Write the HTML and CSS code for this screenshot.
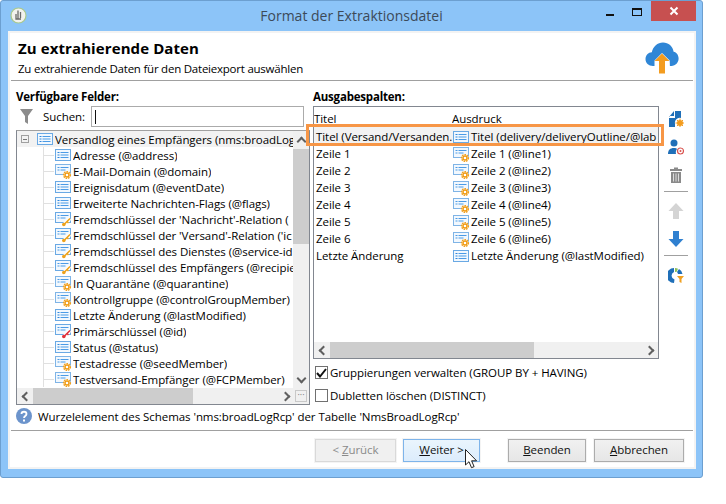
FILE: index.html
```html
<!DOCTYPE html>
<html lang="de">
<head>
    <meta charset="UTF-8">
    <title>Format der Extraktionsdatei</title>
    <link rel="stylesheet" href="styles.css">
</head>
<body>

<svg class="defs" width="0" height="0">
    <symbol id="list" viewBox="0 0 18 16">
        <rect x="1.5" y="2.5" width="15" height="11" fill="#f2f8fe" stroke="#6aa9e4"/>
        <path d="M3.5 5.5h2M3.5 8h2M3.5 10.5h2" stroke="#2f86dc" stroke-width="1.2"/>
        <path d="M6.5 5.5h8M6.5 8h8M6.5 10.5h8" stroke="#4b9be6" stroke-width="1.2"/>
    </symbol>
    <symbol id="gear" viewBox="0 0 18 16">
        <rect x="1.5" y="1.5" width="15" height="10" fill="#f2f8fe" stroke="#7fb4e6"/>
        <path d="M3.5 4.5h2M3.5 7h2M6.5 4.5h8M6.5 7h5" stroke="#4b9be6" stroke-width="1.2"/>
        <circle cx="13" cy="12" r="3.6" fill="#fff"/>
        <circle cx="13" cy="12" r="3.4" fill="none" stroke="#f0a020" stroke-width="1.4" stroke-dasharray="1.6 .9"/>
        <circle cx="13" cy="12" r="2" fill="none" stroke="#f09a10" stroke-width="1.4"/>
    </symbol>
    <symbol id="key" viewBox="0 0 18 16">
        <rect x="1.5" y="1.5" width="15" height="10" fill="#f2f8fe" stroke="#6aa9e4"/>
        <path d="M3.5 4.5h2M3.5 7h2M6.5 4.5h8M6.5 7h5" stroke="#4b9be6" stroke-width="1.2"/>
        <path d="M10.5 13 16 7.5" stroke="#fff" stroke-width="3.5"/>
        <path d="M10.5 13 16 7.5M13 10.500l1.500 1.500" stroke="#eda21c" stroke-width="1.6" fill="none"/>
        <circle cx="9.800" cy="13.500" r="1.800" fill="#eda21c"/>
    </symbol>
    <symbol id="redkey" viewBox="0 0 18 16">
        <rect x="1.5" y="1.5" width="15" height="10" fill="#f2f8fe" stroke="#6aa9e4"/>
        <path d="M3.5 4.5h2M3.5 7h2M6.5 4.5h8M6.5 7h5" stroke="#4b9be6" stroke-width="1.2"/>
        <path d="M10.5 13 16 7.5" stroke="#fff" stroke-width="3.5"/>
        <path d="M10.5 13 16 7.5M13 10.500l1.500 1.500" stroke="#e0303a" stroke-width="1.6" fill="none"/>
        <circle cx="9.800" cy="13.500" r="1.800" fill="#e0303a"/>
    </symbol>
</svg>

<div class="window">
    <div class="titlebar">
        <svg class="app-icon" width="17" height="17" viewBox="0 0 17 17">
            <circle cx="8.500" cy="8.500" r="7.500" fill="#f2f2ee" stroke="#a9c98c" stroke-width="1.200"/>
            <path d="M8 3.500v8M10.500 5v6M6 7v5h5" stroke="#6a6a6a" stroke-width="1.300" fill="none"/>
        </svg>
        <div class="title">Format der Extraktionsdatei</div>
        <div class="win-btns">
            <span class="win-min"></span>
            <span class="win-max"></span>
            <span class="win-close">
                <svg width="10" height="10" viewBox="0 0 10 10"><path d="M1.500 1.500l7 7M8.500 1.500l-7 7" stroke="#fff" stroke-width="2"/></svg>
            </span>
        </div>
    </div>

    <div class="dialog">
        <div class="head">
            <div>
                <h1>Zu extrahierende Daten</h1>
                <p>Zu extrahierende Daten für den Dateiexport auswählen</p>
            </div>
            <svg class="cloud" width="34" height="32" viewBox="0 0 34 32">
                <path d="M8 24C3.500 24 .5 21 .5 17c0-3.800 2.800-6.600 6.300-6.800C8 4.500 12.500.5 18 .5c5.500 0 9.800 3.800 10.600 9.300 3 .6 5 3.400 5 6.800 0 4-3 7.400-7.200 7.400h-1.500l-.2-5.500L17 11 9.500 18.500V24z" fill="#2f86d6"/>
                <path d="M17 11.500l7.500 7.500H20v12.500h-6V19H9.500z" fill="#f39c1f"/>
            </svg>
        </div>

        <div class="columns">
            <div class="left">
                <div class="label">Verfügbare Felder:</div>
                <div class="search">
                    <svg class="funnel" width="13" height="15" viewBox="0 0 13 15"><path d="M0 0h13L8 7v8L5 13V7z" fill="#8c8c8c"/></svg>
                    <span class="search-label">Suchen:</span>
                    <div class="search-input"><i class="caret"></i></div>
                </div>
                <div class="tree">
                    <div class="tree-top">
                        <div class="tree-rows">
                            <div class="tree-row root"><span class="expander"></span><svg class="ic"><use href="#list"/></svg><span>Versandlog eines Empfängers (nms:broadLog</span></div>
                            <div class="tree-kids">
                                <div class="tree-row"><svg class="ic"><use href="#list"/></svg><span>Adresse (@address)</span></div>
                                <div class="tree-row"><svg class="ic"><use href="#gear"/></svg><span>E-Mail-Domain (@domain)</span></div>
                                <div class="tree-row"><svg class="ic"><use href="#list"/></svg><span>Ereignisdatum (@eventDate)</span></div>
                                <div class="tree-row"><svg class="ic"><use href="#list"/></svg><span>Erweiterte Nachrichten-Flags (@flags)</span></div>
                                <div class="tree-row"><svg class="ic"><use href="#key"/></svg><span>Fremdschlüssel der 'Nachricht'-Relation (</span></div>
                                <div class="tree-row"><svg class="ic"><use href="#key"/></svg><span>Fremdschlüssel der 'Versand'-Relation ('ic</span></div>
                                <div class="tree-row"><svg class="ic"><use href="#key"/></svg><span>Fremdschlüssel des Dienstes (@service-id</span></div>
                                <div class="tree-row"><svg class="ic"><use href="#key"/></svg><span>Fremdschlüssel des Empfängers (@recipie</span></div>
                                <div class="tree-row"><svg class="ic"><use href="#gear"/></svg><span>In Quarantäne (@quarantine)</span></div>
                                <div class="tree-row"><svg class="ic"><use href="#gear"/></svg><span>Kontrollgruppe (@controlGroupMember)</span></div>
                                <div class="tree-row"><svg class="ic"><use href="#list"/></svg><span>Letzte Änderung (@lastModified)</span></div>
                                <div class="tree-row"><svg class="ic"><use href="#redkey"/></svg><span>Primärschlüssel (@id)</span></div>
                                <div class="tree-row"><svg class="ic"><use href="#list"/></svg><span>Status (@status)</span></div>
                                <div class="tree-row"><svg class="ic"><use href="#gear"/></svg><span>Testadresse (@seedMember)</span></div>
                                <div class="tree-row"><svg class="ic"><use href="#gear"/></svg><span>Testversand-Empfänger (@FCPMember)</span></div>
                            </div>
                        </div>
                        <div class="vscroll">
                            <span class="chev up"></span>
                            <div class="vtrack"><div class="vthumb"></div></div>
                            <span class="chev down"></span>
                        </div>
                    </div>
                    <div class="hscroll">
                        <span class="chev lt"></span>
                        <div class="htrack tree-track"><div class="hthumb"></div></div>
                        <span class="chev rt"></span>
                        <span class="corner">···</span>
                    </div>
                </div>
            </div>

            <div class="right">
                <div class="label">Ausgabespalten:</div>
                <div class="right-main">
                    <div class="right-col">
                        <div class="table">
                            <div class="table-body">
                                <div class="t-row t-head"><div class="t-title">Titel</div><div class="t-expr">Ausdruck</div></div>
                                <div class="t-row selected"><div class="t-title">Titel (Versand/Versanden.</div><div class="t-expr"><svg class="ic"><use href="#list"/></svg><span>Titel (delivery/deliveryOutline/@lab</span></div></div>
                                <div class="t-row"><div class="t-title">Zeile 1</div><div class="t-expr"><svg class="ic"><use href="#gear"/></svg><span>Zeile 1 (@line1)</span></div></div>
                                <div class="t-row"><div class="t-title">Zeile 2</div><div class="t-expr"><svg class="ic"><use href="#gear"/></svg><span>Zeile 2 (@line2)</span></div></div>
                                <div class="t-row"><div class="t-title">Zeile 3</div><div class="t-expr"><svg class="ic"><use href="#gear"/></svg><span>Zeile 3 (@line3)</span></div></div>
                                <div class="t-row"><div class="t-title">Zeile 4</div><div class="t-expr"><svg class="ic"><use href="#gear"/></svg><span>Zeile 4 (@line4)</span></div></div>
                                <div class="t-row"><div class="t-title">Zeile 5</div><div class="t-expr"><svg class="ic"><use href="#gear"/></svg><span>Zeile 5 (@line5)</span></div></div>
                                <div class="t-row"><div class="t-title">Zeile 6</div><div class="t-expr"><svg class="ic"><use href="#gear"/></svg><span>Zeile 6 (@line6)</span></div></div>
                                <div class="t-row"><div class="t-title">Letzte Änderung</div><div class="t-expr"><svg class="ic"><use href="#list"/></svg><span>Letzte Änderung (@lastModified)</span></div></div>
                            </div>
                            <div class="hscroll">
                                <span class="chev lt"></span>
                                <div class="htrack table-track"><div class="hthumb"></div></div>
                                <span class="chev rt"></span>
                            </div>
                        </div>
                        <label class="check first"><span class="box on"><svg width="11" height="10" viewBox="0 0 11 10"><path d="M1 5l3 3.500L10 1" stroke="#111" stroke-width="2" fill="none"/></svg></span>Gruppierungen verwalten (GROUP BY + HAVING)</label>
                        <label class="check"><span class="box"></span>Dubletten löschen (DISTINCT)</label>
                    </div>
                    <div class="tools">
                        <svg width="16" height="16" viewBox="0 0 16 16"><path d="M1 6l5-6v5H1zM7 0h6v7a5 5 0 0 0-6 6v3H1V7h6z" fill="#1f6fb8"/><circle cx="12" cy="12" r="3" fill="#f39c1f"/><path d="M12 7.500v9M7.500 12h9M9 9l6 6M15 9l-6 6" stroke="#f39c1f"/></svg>
                        <svg width="16" height="16" viewBox="0 0 16 16"><circle cx="6" cy="4" r="3.500" fill="#1f6fb8"/><path d="M0 15c0-4 2-6 6-6 1.500 0 2.500.3 3 1-1 1-1.500 3-1 5z" fill="#1f6fb8"/><circle cx="12.500" cy="12" r="3" fill="none" stroke="#d9534f" stroke-width="1.200"/><circle cx="12.500" cy="12" r="1" fill="#d9534f"/></svg>
                        <svg width="14" height="16" viewBox="0 0 14 16"><path d="M5 1.500h4M1 3h12" stroke="#8a8a8a" stroke-width="2"/><path d="M2 5h10v11H2z" fill="#8a8a8a"/><path d="M4.500 6.500v8M7 6.500v8M9.500 6.500v8" stroke="#ddd"/></svg>
                        <div class="tool-sep"></div>
                        <svg width="16" height="16" viewBox="0 0 16 16"><path d="M8 0l7.500 8H11v8H5V8H.5z" fill="#d4d4d4"/></svg>
                        <svg width="16" height="16" viewBox="0 0 16 16"><path d="M8 16L.5 8H5V0h6v8h4.500z" fill="#2f80d0"/></svg>
                        <div class="tool-sep"></div>
                        <svg width="16" height="17" viewBox="0 0 16 17"><path d="M6 1a7.500 7.500 0 0 0 0 15l.5-3.500A4 4 0 0 1 6 5z" fill="#1f6fb8"/><path d="M7 1a7 7 0 0 1 3 .8L8.500 5H7z" fill="#8dc05a"/><path d="M11 2a7 7 0 0 1 3.500 5H10a4 4 0 0 0-1-2z" fill="#1f6fb8"/><path d="M9 9h7l-2.500 3v4l-2-1v-3z" fill="#f0a020"/></svg>
                    </div>
                </div>
            </div>
        </div>

        <div class="hint">
            <svg width="16" height="16" viewBox="0 0 16 16"><circle cx="8" cy="8" r="8" fill="#6c94cc"/><path d="M5.500 6c0-3 5-3 5 0 0 2-2.500 2-2.500 4" stroke="#fff" stroke-width="1.800" fill="none"/><path d="M7 11.500h2v2H7z" fill="#fff"/></svg>
            <span>Wurzelelement des Schemas 'nms:broadLogRcp' der Tabelle 'NmsBroadLogRcp'</span>
        </div>

        <div class="foot">
            <button class="btn back" disabled>&lt; <u>Z</u>urück</button>
            <button class="btn next"><u>W</u>eiter &gt;</button>
            <button class="btn finish"><u>B</u>eenden</button>
            <button class="btn cancel"><u>A</u>bbrechen</button>
        </div>
    </div>

    <div class="row-mark"></div>
    <svg class="cursor" width="13" height="20" viewBox="0 0 13 20"><path d="M.5.500v15.500l3.500-3.300 2.500 6 2.600-1.100-2.500-5.800h5z" fill="#fff" stroke="#222"/></svg>
</div>

</body>
</html>
```

FILE: styles.css
```css
* {
    box-sizing: border-box;
}
html, body {
    margin: 0;
    height: 100%;
    overflow: hidden;
    background-color: #fff;
}
body {
    font-family: "Open Sans", "Noto Sans", sans-serif;
    font-size: 11.5px;
    letter-spacing: -0.06px;
    color: #000;
}
.defs {
    position: absolute;
}
.window {
    position: relative;
    width: 703px;
    height: 478px;
    background-color: #8cc4f8;
    border: 1px solid #6c9fd0;
    border-radius: 3px;
}
.titlebar {
    position: relative;
    height: 30px;
    display: flex;
    align-items: flex-start;
}
.app-icon {
    margin: 6px 0 0 9px;
}
.title {
    position: absolute;
    left: 0;
    right: 0;
    top: 5px;
    text-align: center;
    font-size: 14px;
    letter-spacing: 0;
    color: #3c4a58;
    line-height: 20px;
}
.win-btns {
    position: absolute;
    right: 6px;
    top: 0;
    display: flex;
    align-items: flex-start;
}
.win-min {
    width: 8px;
    height: 2px;
    margin: 13px 18px 0 0;
    background-color: #111;
}
.win-max {
    width: 10px;
    height: 8px;
    margin-top: 7px;
    margin-right: 9px;
    border: 1px solid #111;
    border-top-width: 2px;
}
.win-close {
    width: 45px;
    height: 20px;
    background-color: #c75050;
    display: flex;
    align-items: center;
    justify-content: center;
}
.dialog {
    margin: 0 6px 0 7px;
    height: 438px;
    background-color: #fff;
    border: 2px solid #f3f3f3;
    display: flex;
    flex-direction: column;
}
.head {
    height: 48px;
    margin: 0 1px;
    padding: 5px 14px 0 7px;
    border-bottom: 1px solid #a0a0a0;
    display: flex;
    justify-content: space-between;
}
.head h1 {
    margin: 0;
    font-size: 15px;
    line-height: 20px;
    font-weight: 700;
    letter-spacing: 0.1px;
}
.head p {
    margin: 3px 0 0;
    line-height: 16px;
    letter-spacing: -0.23px;
}
.cloud {
    margin-top: 4px;
}
.columns {
    height: 327px;
    display: flex;
    padding: 8px 0 0 6px;
}
.label {
    font-weight: 700;
    line-height: 16px;
    letter-spacing: -0.2px;
}
.left {
    width: 297px;
}
.search {
    height: 23px;
    display: flex;
    align-items: center;
}
.funnel {
    margin-left: 4px;
}
.search-label {
    margin-left: 10px;
    width: 48px;
}
.search-input {
    width: 213px;
    height: 21px;
    border: 1px solid #ababab;
    padding: 3px;
}
.caret {
    display: block;
    width: 1px;
    height: 14px;
    background-color: #111;
}
.tree {
    width: 294px;
    height: 275px;
    margin-top: 2px;
    border: 1px solid #828790;
    border-top-color: #a0a0a0;
    display: flex;
    flex-direction: column;
}
.tree-top {
    flex: 1;
    display: flex;
    min-height: 0;
}
.tree-rows {
    flex: 1;
    min-width: 0;
    overflow: hidden;
}
.tree-row {
    position: relative;
    height: 16px;
    display: flex;
    align-items: center;
    white-space: nowrap;
}
.tree-row span {
    overflow: hidden;
}
.tree-row.root {
    padding-left: 4px;
    background-color: #f2f2f2;
}
.tree-row .expander {
    flex: none;
    width: 8px;
    height: 8px;
    margin-right: 7px;
    border: 1px solid #a0a0a0;
    background: linear-gradient(#777, #777) center / 4px 1px no-repeat;
}
.tree-kids {
    margin-left: 26px;
    border-left: 1px solid #e0e0e0;
}
.tree-kids .tree-row {
    padding-left: 10px;
}
.tree-kids .tree-row::before {
    content: "";
    position: absolute;
    left: 0;
    top: 8px;
    width: 10px;
    height: 1px;
    background-color: #e0e0e0;
}
.ic {
    flex: none;
    width: 18px;
    height: 16px;
    margin-right: 1px;
}
.vscroll {
    width: 16px;
    background-color: #f0f0f0;
    display: flex;
    flex-direction: column;
    align-items: center;
}
.vtrack {
    flex: 1;
    width: 100%;
    padding-top: 2px;
}
.vthumb {
    height: 95px;
    background-color: #cdcdcd;
}
.chev {
    flex: none;
    position: relative;
    width: 16px;
    height: 16px;
}
.chev::after {
    content: "";
    position: absolute;
    left: 5px;
    top: 5px;
    width: 5px;
    height: 5px;
    border-left: 2px solid #606060;
    border-top: 2px solid #606060;
}
.chev.up::after {
    transform: rotate(45deg);
    top: 7px;
}
.chev.down::after {
    transform: rotate(225deg);
    top: 3px;
}
.chev.lt::after {
    transform: rotate(-45deg);
    left: 6px;
}
.chev.rt::after {
    transform: rotate(135deg);
    left: 4px;
}
.hscroll {
    flex: none;
    height: 16px;
    background-color: #f0f0f0;
    display: flex;
}
.htrack {
    flex: 1;
}
.hthumb {
    height: 100%;
    background-color: #cdcdcd;
}
.tree-track .hthumb {
    width: 160px;
}
.table-track .hthumb {
    width: 204px;
}
.corner {
    width: 12px;
    height: 12px;
    margin: 2px 2px 0 1px;
    border: 1px solid #c8c8c8;
    font-size: 9px;
    line-height: 8px;
    text-align: center;
    color: #777;
}
.right {
    flex: 1;
}
.right-main {
    display: flex;
    margin-top: 1px;
}
.right-col {
    width: 346px;
}
.table {
    height: 253px;
    border: 1px solid #828790;
    display: flex;
    flex-direction: column;
}
.table-body {
    flex: 1;
    overflow: hidden;
}
.t-row {
    height: 17px;
    display: flex;
    align-items: center;
    white-space: nowrap;
}
.t-row.t-head {
    height: 19px;
    padding-top: 3px;
}
.t-row.selected {
    height: 19px;
    padding-top: 2px;
    background-color: #f2f2f2;
}
.t-title {
    width: 138px;
    padding-left: 2px;
    overflow: hidden;
}
.t-head .t-title {
    padding-left: 0;
}
.t-expr {
    flex: 1;
    min-width: 0;
    display: flex;
    align-items: center;
    overflow: hidden;
}
.check {
    height: 23px;
    display: flex;
    align-items: center;
    padding-left: 2px;
}
.check.first {
    margin-top: 2px;
}
.box {
    width: 13px;
    height: 13px;
    margin-right: 2px;
    border: 1px solid #707070;
    display: flex;
    align-items: center;
    justify-content: center;
}
.tools {
    width: 34px;
    padding-top: 5px;
    display: flex;
    flex-direction: column;
    align-items: center;
    gap: 12px;
}
.tool-sep {
    width: 24px;
    height: 1px;
    margin: -4px 0 -1px;
    background-color: #a0a0a0;
}
.hint {
    height: 22px;
    padding: 0 0 6px 6px;
    display: flex;
    align-items: center;
    gap: 6px;
}
.foot {
    flex: 1;
    margin: 0 1px;
    padding-top: 8px;
    border-top: 1px solid #a0a0a0;
    display: flex;
    align-items: flex-start;
}
.btn {
    height: 23px;
    padding: 0 0 2px;
    font-family: inherit;
    font-size: 11.5px;
    letter-spacing: inherit;
    color: #111;
    background: linear-gradient(#f1f1f1, #e6e6e6);
    border: 1px solid #acacac;
    box-shadow: 0 0 0 1px #f4f4f4;
}
.back {
    width: 81px;
    margin-left: 304px;
    color: #8a8a8a;
    background: #f0f0f0;
    border-color: #d9d9d9;
}
.next {
    width: 77px;
    margin-left: 7px;
    background: linear-gradient(#eaf5fd, #dcecfc);
    border-color: #7eb4ea;
}
.finish {
    width: 78px;
    margin-left: 28px;
}
.cancel {
    width: 90px;
    margin-left: 8px;
}
.row-mark {
    position: absolute;
    left: 305px;
    top: 123px;
    width: 358px;
    height: 22px;
    border: 3px solid #f79646;
}
.cursor {
    position: absolute;
    left: 464px;
    top: 448px;
}
```
